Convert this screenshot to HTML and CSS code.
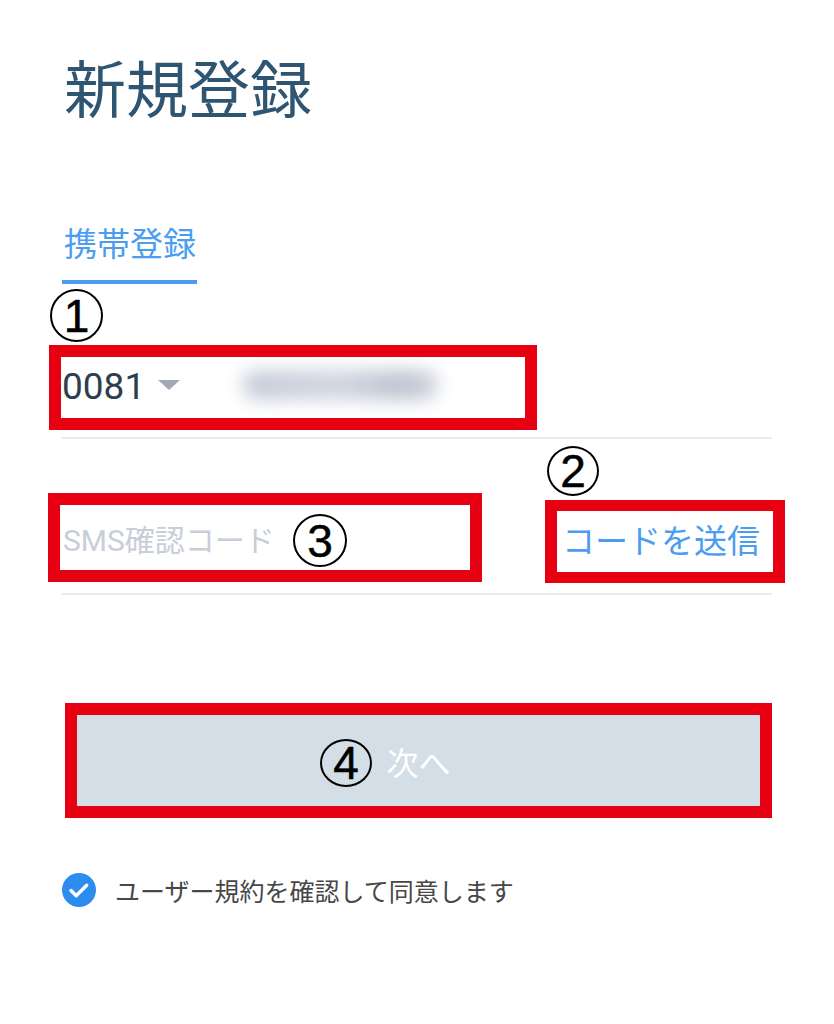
FILE: index.html
```html
<!DOCTYPE html>
<html lang="ja">
<head>
<meta charset="utf-8">
<title>新規登録</title>
<link rel="stylesheet" href="styles.css">
</head>
<body>
<main class="page">
  <h1 class="title">新規登録</h1>
  <div class="tabs"><span class="tab tab-active">携帯登録</span></div>

  <div class="field field-phone">
    <span class="cc">0081</span>
    <span class="caret"></span>
    <span class="masked" aria-label="電話番号"></span>
    <span class="anno anno-phone"></span>
    <span class="mark mark-1">1</span>
  </div>

  <div class="field field-sms">
    <span class="placeholder">SMS確認コード</span>
    <span class="send">コードを送信</span>
    <span class="anno anno-sms"></span>
    <span class="anno anno-send"></span>
    <span class="mark mark-2">2</span>
    <span class="mark mark-3">3</span>
  </div>

  <div class="btn-row">
    <button class="next" type="button">次へ</button>
    <span class="anno anno-btn"></span>
    <span class="mark mark-4">4</span>
  </div>

  <div class="agree">
    <span class="check">
      <svg viewBox="0 0 34 34" width="34" height="34"><circle cx="17" cy="17" r="17" fill="#2d8cf0"/><path d="M9 17.5l5.2 5.2 10.5-10.5" fill="none" stroke="#fff" stroke-width="3.4" stroke-linecap="round" stroke-linejoin="round"/></svg>
    </span>
    <span class="agree-text">ユーザー規約を確認して同意します</span>
  </div>
</main>
</body>
</html>
```

FILE: styles.css
```css
* { box-sizing: border-box; }
html, body { margin: 0; padding: 0; background: #fff; }
body {
  font-family: Roboto, "Noto Sans CJK JP", "Noto Sans", sans-serif;
  width: 834px;
  height: 1024px;
  overflow: hidden;
}
.page {
  padding: 55px 62px 0 62px;
}
.title {
  margin: 0;
  font-family: "Noto Sans CJK JP", sans-serif;
  font-weight: 400;
  font-size: 62px;
  line-height: 62px;
  color: #2e5672;
  padding-left: 2px;
}
.tabs {
  margin-top: 109px;
  display: flex;
}
.tab {
  font-family: "Noto Sans CJK JP", sans-serif;
  font-size: 33px;
  line-height: 33px;
  padding: 0 1px 21px 2px;
  color: #4b9df2;
}
.tab-active {
  border-bottom: 4px solid #4b9df2;
}
.field {
  position: relative;
  display: flex;
  align-items: center;
  height: 106px;
  border-bottom: 2px solid #e8eaf1;
}
.field-phone { margin-top: 49px; }
.field-sms { margin-top: 50px; }
.cc {
  font-size: 37px;
  color: #2c3e50;
  line-height: 1;
  padding-top: 2px;
}
.caret {
  width: 0;
  height: 0;
  margin-left: 13px;
  border-left: 11px solid transparent;
  border-right: 11px solid transparent;
  border-top: 10px solid #a3a8b8;
}
.masked {
  display: block;
  margin-left: 62px;
  width: 196px;
  height: 30px;
  border-radius: 15px;
  background: linear-gradient(90deg, #c6ccd8 0%, #d0d5df 50%, #bcc3d0 80%, #ccd1db 100%);
  filter: blur(9px);
}
.placeholder {
  font-size: 30px;
  line-height: 1;
  color: #c8ced8;
  padding-left: 1px;
}
.send {
  margin-left: auto;
  padding-right: 12px;
  font-size: 33px;
  line-height: 1;
  color: #4b9df2;
}
.btn-row {
  position: relative;
  margin-top: 108px;
  margin-left: 3px;
  width: 707px;
  height: 115px;
}
.next {
  display: flex;
  align-items: center;
  justify-content: center;
  width: 100%;
  height: 100%;
  border: 0;
  padding: 0;
  background: #d3dee6;
  color: #fff;
  font-family: "Noto Sans CJK JP", sans-serif;
  font-size: 32px;
  line-height: 1;
}
.agree {
  display: flex;
  align-items: center;
  margin-top: 55px;
  height: 34px;
}
.check { display: block; width: 34px; height: 34px; }
.check svg { display: block; }
.agree-text {
  margin-left: 19px;
  font-family: "Noto Sans CJK JP", sans-serif;
  font-size: 25px;
  line-height: 1;
  color: #474747;
}

/* annotation overlays */
.anno {
  position: absolute;
  border: 12px solid #e60012;
  pointer-events: none;
}
.anno-phone { left: -13px; top: 12px; width: 488px; height: 85px; }
.anno-sms { left: -14px; top: 4px; width: 434px; height: 89px; }
.anno-send { left: 483px; top: 11px; width: 240px; height: 83px; border-width: 11px 12px; }
.anno-btn { left: 0; top: 0; width: 100%; height: 100%; }

.mark {
  position: absolute;
  display: flex;
  align-items: center;
  justify-content: center;
  border: 2px solid #000;
  border-radius: 50%;
  font-family: "Liberation Sans", Arial, sans-serif;
  font-size: 46px;
  line-height: 1;
  color: #000;
  -webkit-text-stroke: 0.5px #000;
}
.mark-1 { left: -12px; top: -44px; width: 53px; height: 53px; }
.mark-2 { left: 485px; top: -43px; width: 52px; height: 50px; }
.mark-3 { left: 231px; top: 25px; width: 54px; height: 53px; }
.mark-4 { left: 255px; top: 36px; width: 52px; height: 48px; }
```
